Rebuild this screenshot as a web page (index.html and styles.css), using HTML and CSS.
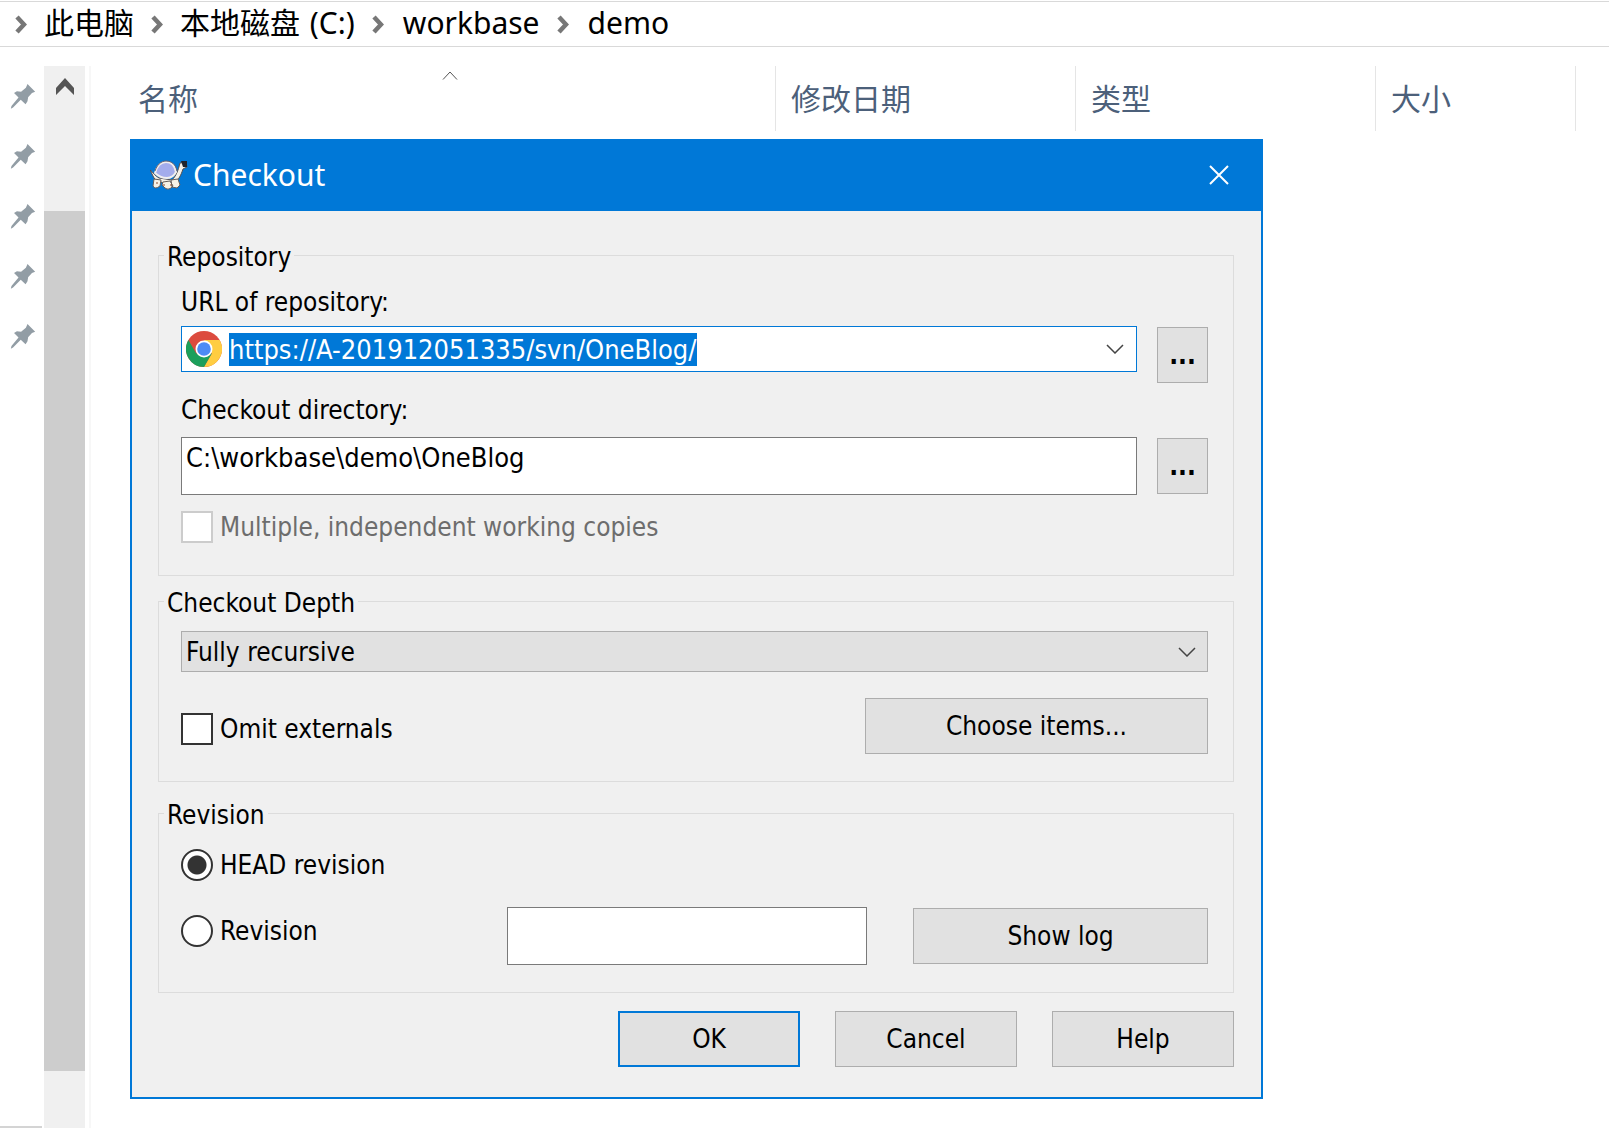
FILE: index.html
```html
<!DOCTYPE html>
<html lang="zh-CN">
<head>
<meta charset="utf-8">
<title>Checkout</title>
<link rel="stylesheet" href="styles.css">
</head>
<body>
<svg class="defs" aria-hidden="true">
  <symbol id="pin" viewBox="30 70 78 78">
    <path d="M83 70 L107 94 L97 98 L85 111 L83 124 L77 133 L62 119 L38 143 L31 147 L33 139 L55 112 L41 98 L50 93 L63 94 L78 82 Z"/>
  </symbol>
  <symbol id="crumb" viewBox="0 0 12 19">
    <path d="M2 2 L9 9.500 L2 17" fill="none" stroke="currentColor" stroke-width="4.500"/>
  </symbol>
  <symbol id="down" viewBox="0 0 18 10">
    <path d="M1 1 L9 9 L17 1" fill="none" stroke="currentColor" stroke-width="1.500"/>
  </symbol>
</svg>

<nav class="path">
  <svg class="crumb"><use href="#crumb"/></svg><span>此电脑</span>
  <svg class="crumb"><use href="#crumb"/></svg><span>本地磁盘 <span class="latin">(C:)</span></span>
  <svg class="crumb"><use href="#crumb"/></svg><span class="latin">workbase</span>
  <svg class="crumb"><use href="#crumb"/></svg><span class="latin">demo</span>
</nav>

<div class="explorer">
  <aside class="pins">
    <svg class="pin"><use href="#pin"/></svg>
    <svg class="pin"><use href="#pin"/></svg>
    <svg class="pin"><use href="#pin"/></svg>
    <svg class="pin"><use href="#pin"/></svg>
    <svg class="pin"><use href="#pin"/></svg>
  </aside>
  <div class="scrollbar">
    <svg class="scroll-up" viewBox="0 0 18 17"><path d="M0 10 L9 0 L18 10 V17 L9 8 L0 17 Z" fill="#555"/></svg>
    <div class="thumb"></div>
  </div>
  <main class="files">
    <table class="columns">
      <thead>
        <tr>
          <th class="col-name">名称<svg class="sort" viewBox="0 0 16 9"><path d="M1 8.500 L8 1 L15 8.500" fill="none" stroke="#555"/></svg></th>
          <th class="col-date">修改日期</th>
          <th class="col-type">类型</th>
          <th class="col-size">大小</th>
        </tr>
      </thead>
    </table>

    <form class="dialog" role="dialog" aria-labelledby="dialog-title">
      <header class="titlebar">
        <svg class="turtle" viewBox="0 0 38 30">
          <path d="M0 10 C3 12 5 16 9 18 L22 20 C26 16 28 11 30 3 L36 2 L37 7 L33 9 C31 15 29 20 24 22 C18 24 8 23 4 18 Z" fill="#f4f1e8" stroke="#554f50" stroke-width="1"/>
          <path d="M4 19 L11 20 L10 26 Q5 30 3 26 Z M13 22 L20 21 L23 26 Q19 31 15 28 L12 25 Z M21 20 L28 19 L30 25 L27 28 L22 27 Z" fill="#f7f2e6" stroke="#665f5c" stroke-width="1"/>
          <path d="M5 13 C7 6 11 2 16 2 C22 2 25 7 26 12 C24 16 22 18 17 18 C12 18 8 16 5 13 Z" fill="#a3acec" stroke="#f0eeee" stroke-width="2"/>
          <path d="M5 11 C7 5 11 1 16 1 C22 1 26 5 27 11" fill="none" stroke="#6c6170" stroke-width="1"/>
          <path d="M31 1 H37 V7 H33 Z" fill="#20242c"/>
          <path d="M13 25 h2 M7 22 v2 M20 25 h2" stroke="#8c4a2c" stroke-width="1"/>
        </svg>
        <h1 class="title" id="dialog-title">Checkout</h1>
        <button class="close" type="button" aria-label="Close">
          <svg viewBox="0 0 20 20"><path d="M1 1 L19 19 M19 1 L1 19" stroke="#fff" stroke-width="2"/></svg>
        </button>
      </header>

      <div class="content">
        <fieldset class="group repository">
          <legend>Repository</legend>
          <label class="caption" for="url">URL of repository:</label>
          <div class="row url-row">
            <div class="combo">
              <svg class="chrome" viewBox="0 0 36 36">
                <circle cx="18" cy="18" r="18" fill="#dc4b3e"/>
                <path d="M33.600 9 L18 9 L25.800 22.500 L18 36 A18 18 0 0 0 33.600 9 Z" fill="#ffcd41"/>
                <path d="M2.400 9 L10.200 22.500 H25.800 L18 36 A18 18 0 0 1 2.400 9 Z" fill="#1c9f5b"/>
                <circle cx="18" cy="18" r="8.500" fill="#fff"/>
                <circle cx="18" cy="18" r="6.800" fill="#4c8bf5"/>
              </svg>
              <input class="url" id="url" type="text" value="https://A-201912051335/svn/OneBlog/">
              <svg class="down"><use href="#down"/></svg>
            </div>
            <button class="button browse" type="button">...</button>
          </div>
          <label class="caption" for="dir">Checkout directory:</label>
          <div class="row dir-row">
            <input class="field directory" id="dir" type="text" value="C:\workbase\demo\OneBlog">
            <button class="button browse" type="button">...</button>
          </div>
          <label class="option disabled"><input class="box" type="checkbox" disabled>Multiple, independent working copies</label>
        </fieldset>

        <fieldset class="group depth">
          <legend>Checkout Depth</legend>
          <div class="select">
            <select aria-label="Checkout Depth"><option>Fully recursive</option></select>
            <svg class="down"><use href="#down"/></svg>
          </div>
          <div class="row omit-row">
            <label class="option"><input class="box" type="checkbox">Omit externals</label>
            <button class="button choose" type="button">Choose items...</button>
          </div>
        </fieldset>

        <fieldset class="group revision">
          <legend>Revision</legend>
          <label class="option"><input class="box round" type="radio" name="rev" checked>HEAD revision</label>
          <div class="row rev-row">
            <label class="option"><input class="box round" type="radio" name="rev">Revision</label>
            <input class="field" type="text" aria-label="Revision number">
            <button class="button" type="button">Show log</button>
          </div>
        </fieldset>

        <footer class="actions">
          <button class="button primary" type="submit">OK</button>
          <button class="button" type="button">Cancel</button>
          <button class="button" type="button">Help</button>
        </footer>
      </div>
    </form>
  </main>
</div>
</body>
</html>
```
FILE: styles.css
```css
* {
  box-sizing: border-box;
}

body {
  margin: 0;
  min-height: 100vh;
  display: flex;
  flex-direction: column;
  background: #fff;
  color: #000;
  font: 30px/40px "Noto Sans", "Noto Sans CJK SC", sans-serif;
}

.defs {
  display: none;
}

.path {
  display: flex;
  align-items: center;
  gap: 17px;
  height: 46px;
  margin-top: 1px;
  padding-left: 15px;
  border: solid #d9d9d9;
  border-width: 1px 0;
  white-space: nowrap;
}

.path > span {
  padding-bottom: 2px;
}

.path .latin {
  margin-left: 2px;
}

.crumb {
  width: 12px;
  height: 19px;
  color: #777;
}

.explorer {
  flex: 1;
  display: flex;
  margin-top: 19px;
}

.pins {
  width: 42px;
  margin-right: 2px;
  padding: 18px 0 0 10px;
  display: flex;
  flex-direction: column;
  gap: 35px;
  border-bottom: 2px solid #d4d4d4;
}

.pin {
  width: 26px;
  height: 25px;
  fill: #929da5;
}

.scrollbar {
  width: 41px;
  margin-right: 4px;
  display: flex;
  flex-direction: column;
  align-items: center;
  background: #f0f0f0;
  padding: 12px 0 57px;
}

.scroll-up {
  width: 18px;
  height: 17px;
  margin-bottom: 116px;
}

.thumb {
  flex: 1;
  width: 100%;
  background: #cdcdcd;
}

.files {
  flex: 1;
  border-left: 2px solid #f7f7f7;
}

.columns {
  table-layout: fixed;
  width: 1485px;
  border-collapse: separate;
  border-spacing: 0;
  color: #4c607a;
}

.columns th {
  position: relative;
  height: 65px;
  padding: 1px 0 0 15px;
  border-right: 1px solid #e5e5e5;
  text-align: left;
  font-weight: 400;
}

.columns .col-name {
  width: 685px;
  padding-left: 47px;
}

.col-date,
.col-type {
  width: 300px;
}

.col-size {
  width: 200px;
}

.sort {
  position: absolute;
  top: 5px;
  left: 351px;
  width: 16px;
  height: 9px;
}

.dialog {
  max-width: 1133px;
  margin: 8px 0 24px 39px;
  border: 2px solid #0078d7;
  background: #f0f0f0;
  font: 26px/30px "DejaVu Sans Condensed", "Noto Sans", sans-serif;
}

.titlebar {
  display: flex;
  align-items: center;
  height: 70px;
  padding: 0 32px 2px 18px;
  background: #0078d7;
  color: #fff;
}

.turtle {
  width: 38px;
  height: 30px;
}

.title {
  flex: 1;
  margin: 0 0 0 5px;
  font: 30px/40px "Noto Sans", sans-serif;
}

.close {
  padding: 0;
  border: 0;
  background: none;
  line-height: 0;
}

.close svg {
  width: 20px;
  height: 20px;
}

.content {
  padding: 27px 27px 30px 26px;
}

.group {
  min-width: 0;
  margin: 0;
  padding: 0 25px 27px 22px;
  border: 1px solid #dcdcdc;
}

.group legend {
  margin-left: -17px;
  padding: 4px 3px 0;
}

.repository {
  padding-top: 15px;
  padding-bottom: 32px;
}

.depth {
  margin-top: 8px;
  padding-top: 13px;
}

.revision {
  margin-top: 14px;
  padding-top: 19px;
}

.caption {
  display: block;
}

.row {
  display: flex;
  align-items: flex-start;
}

.url-row,
.dir-row {
  gap: 20px;
}

.url-row {
  margin: 9px 0 12px;
}

.dir-row {
  margin: 12px 0 16px;
}

.row .button {
  margin-top: 1px;
}

.combo {
  flex: 1;
  display: flex;
  align-items: center;
  height: 46px;
  padding: 0 12px 0 4px;
  border: 1px solid #0078d7;
  background: #fff;
}

.chrome {
  width: 36px;
  height: 36px;
  margin-right: 7px;
}

.url {
  width: 468px;
  height: 33px;
  padding: 0;
  border: 0;
  background: #0078d7;
  color: #fff;
  font: 27px/33px "DejaVu Sans Condensed", "Noto Sans", sans-serif;
}

.down {
  width: 18px;
  height: 10px;
  margin-left: auto;
  color: #444;
}

.field {
  height: 58px;
  padding: 0 4px;
  border: 1px solid #7a7a7a;
  background: #fff;
  color: #000;
  font: 27px/33px "DejaVu Sans Condensed", "Noto Sans", sans-serif;
}

.directory {
  flex: 1;
  min-width: 0;
  padding-bottom: 17px;
}

.button {
  height: 56px;
  padding: 0;
  border: 1px solid #adadad;
  background: #e1e1e1;
  color: #000;
  font: inherit;
}

.browse {
  width: 51px;
  font-weight: 700;
}

.option {
  display: flex;
  align-items: center;
  gap: 7px;
  height: 32px;
}

.disabled {
  color: #6d6d6d;
}

.box {
  appearance: none;
  width: 32px;
  height: 32px;
  margin: 0;
  border: 2px solid #333;
  background: #fff;
}

.box:disabled {
  border-color: #ccc;
}

.round {
  border-radius: 50%;
}

.round:checked {
  background: radial-gradient(circle, #333 9px, #fff 10px);
}

.select {
  position: relative;
}

.select select {
  display: block;
  width: 100%;
  height: 41px;
  padding: 0 40px 0 4px;
  appearance: none;
  border: 1px solid #adadad;
  border-radius: 0;
  background: #e1e1e1;
  color: #000;
  font: inherit;
}

.select .down {
  position: absolute;
  top: 16px;
  right: 12px;
}

.omit-row {
  align-items: flex-end;
  justify-content: space-between;
  margin-top: 25px;
}

.omit-row .option {
  margin-bottom: 9px;
}

.choose {
  width: 343px;
}

.rev-row {
  margin-top: 26px;
}

.rev-row .option {
  width: 326px;
  margin-top: 8px;
}

.rev-row .field {
  width: 360px;
  margin-right: 46px;
}

.rev-row .button {
  flex: 1;
}

.actions {
  display: flex;
  justify-content: flex-end;
  gap: 35px;
  margin-top: 18px;
}

.actions .button {
  width: 182px;
}

.actions .primary {
  border: 2px solid #0078d7;
}
```
